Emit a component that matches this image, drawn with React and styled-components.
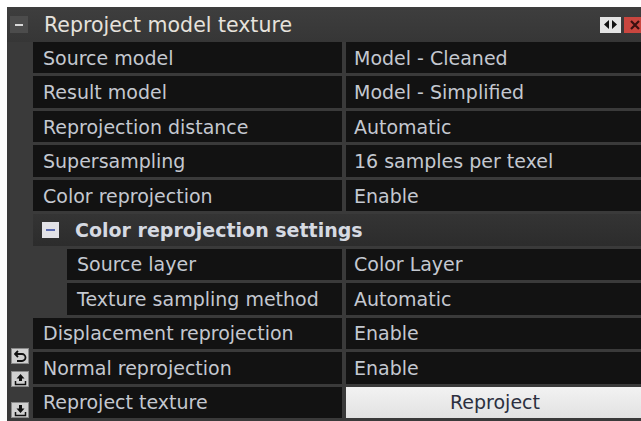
import React from "react";
import styled, { createGlobalStyle } from "styled-components";

const GlobalStyle = createGlobalStyle`
  html, body {
    margin: 0;
    padding: 0;
    background: #ffffff;
    overflow: hidden;
  }
  * {
    box-sizing: border-box;
  }
`;

const Frame = styled.div`
  width: 641px;
  height: 421px;
  padding: 7px 0 0 7px;
  background: #ffffff;
  font-family: "DejaVu Sans", "Liberation Sans", sans-serif;
  overflow: hidden;
`;

const Panel = styled.div`
  width: 641px;
  height: 100%;
  background: #3a3a3a;
  display: flex;
  flex-direction: column;
`;

const Header = styled.div`
  height: 35px;
  display: flex;
  align-items: center;
  padding-left: 3px;
  background: linear-gradient(#3e3e3e, #363636);
`;

const CollapseBox = styled.div`
  width: 18px;
  height: 17px;
  background: #4c4c4c;
  display: flex;
  align-items: center;
  justify-content: center;

  &::after {
    content: "";
    width: 8px;
    height: 2px;
    background: #d8d8d8;
  }
`;

const Title = styled.div`
  margin-left: 16px;
  flex: 1;
  color: #e6e2dc;
  font-size: 20.5px;
`;

const HeadButton = styled.div`
  width: 21px;
  height: 16px;
  margin-right: 3px;
  background: ${(p) => (p.$red ? "#c9463f" : "#e4e4e4")};
  display: flex;
  align-items: center;
  justify-content: center;
`;

const Body = styled.div`
  flex: 1;
  display: flex;
`;

const Strip = styled.div`
  width: 26px;
  display: flex;
  flex-direction: column;
  justify-content: flex-end;
  align-items: center;
  padding-bottom: 3px;
`;

const ToolIcon = styled.div`
  width: 18px;
  height: 16px;
  margin-top: ${(p) => p.$gap || 0}px;
  background: #d0d0d0;
  border: 1px solid #8a8a8a;
  display: flex;
  align-items: center;
  justify-content: center;
`;

const Rows = styled.div`
  flex: 1;
  display: flex;
  flex-direction: column;
  gap: 3px;
  padding-bottom: 3px;
`;

const Row = styled.div`
  flex: 1;
  display: grid;
  grid-template-columns: ${(p) => (p.$indent ? "34px 275px 4px 1fr" : "309px 4px 1fr")};
`;

const Cell = styled.div`
  background: #121212;
  color: #c4c8d0;
  font-size: 19px;
  display: flex;
  align-items: center;
  padding-left: ${(p) => (p.$value ? "8px" : "10px")};
  white-space: nowrap;
  overflow: hidden;
`;

const Spacer = styled.div``;

const GroupRow = styled.div`
  flex: 1;
  display: flex;
  align-items: center;
  padding-left: 9px;
  background: linear-gradient(#343434, #2c2c2c);
`;

const GroupBox = styled.div`
  width: 17px;
  height: 16px;
  background: #e2e2e6;
  display: flex;
  align-items: center;
  justify-content: center;

  &::after {
    content: "";
    width: 9px;
    height: 2px;
    background: #5a6ab0;
  }
`;

const GroupTitle = styled.div`
  margin-left: 16px;
  color: #d6dae2;
  font-size: 19px;
  font-weight: bold;
`;

const Button = styled.div`
  background: linear-gradient(#f2f2f2, #e2e2e2);
  color: #2c3040;
  font-size: 19px;
  display: flex;
  align-items: center;
  justify-content: center;
  padding-right: 4px;
`;

const rowsTop = [
  ["Source model", "Model - Cleaned"],
  ["Result model", "Model - Simplified"],
  ["Reprojection distance", "Automatic"],
  ["Supersampling", "16 samples per texel"],
  ["Color reprojection", "Enable"],
];

const rowsSub = [
  ["Source layer", "Color Layer"],
  ["Texture sampling method", "Automatic"],
];

const rowsBottom = [
  ["Displacement reprojection", "Enable"],
  ["Normal reprojection", "Enable"],
];

const PropRow = ({ label, value, indent }) => (
  <Row $indent={indent}>
    {indent && <Spacer />}
    <Cell>{label}</Cell>
    <Spacer />
    <Cell $value>{value}</Cell>
  </Row>
);

export default function App() {
  return (
    <>
      <GlobalStyle />
      <Frame>
        <Panel>
          <Header>
            <CollapseBox />
            <Title>Reproject model texture</Title>
            <HeadButton>
              <svg width="13" height="9" viewBox="0 0 13 9">
                <path d="M5 0 L0 4.5 L5 9 Z M8 0 L13 4.5 L8 9 Z" fill="#111" />
              </svg>
            </HeadButton>
            <HeadButton $red>
              <svg width="10" height="10" viewBox="0 0 10 10">
                <path d="M1 1 L9 9 M9 1 L1 9" stroke="#3a1010" strokeWidth="2.2" />
              </svg>
            </HeadButton>
          </Header>
          <Body>
            <Strip>
              <ToolIcon>
                <svg width="13" height="13" viewBox="0 0 13 13">
                  <path d="M4 1 L1 4 L4 7 M1.5 4 H8 A3.5 3.5 0 0 1 8 11 H3" fill="none" stroke="#111" strokeWidth="1.8" />
                </svg>
              </ToolIcon>
              <ToolIcon $gap={7}>
                <svg width="13" height="13" viewBox="0 0 13 13">
                  <path d="M6.5 1 L2.5 5.5 H5 V8 H8 V5.5 H10.5 Z" fill="#111" />
                  <path d="M1.5 8 V11.5 H11.5 V8" fill="none" stroke="#111" strokeWidth="1.5" />
                </svg>
              </ToolIcon>
              <ToolIcon $gap={15}>
                <svg width="13" height="13" viewBox="0 0 13 13">
                  <path d="M6.5 9 L2.5 4.5 H5 V1 H8 V4.5 H10.5 Z" fill="#111" />
                  <path d="M1.5 8 V11.5 H11.5 V8" fill="none" stroke="#111" strokeWidth="1.5" />
                </svg>
              </ToolIcon>
            </Strip>
            <Rows>
              {rowsTop.map(([l, v]) => (
                <PropRow key={l} label={l} value={v} />
              ))}
              <GroupRow>
                <GroupBox />
                <GroupTitle>Color reprojection settings</GroupTitle>
              </GroupRow>
              {rowsSub.map(([l, v]) => (
                <PropRow key={l} label={l} value={v} indent />
              ))}
              {rowsBottom.map(([l, v]) => (
                <PropRow key={l} label={l} value={v} />
              ))}
              <Row>
                <Cell>Reproject texture</Cell>
                <Spacer />
                <Button>Reproject</Button>
              </Row>
            </Rows>
          </Body>
        </Panel>
      </Frame>
    </>
  );
}
